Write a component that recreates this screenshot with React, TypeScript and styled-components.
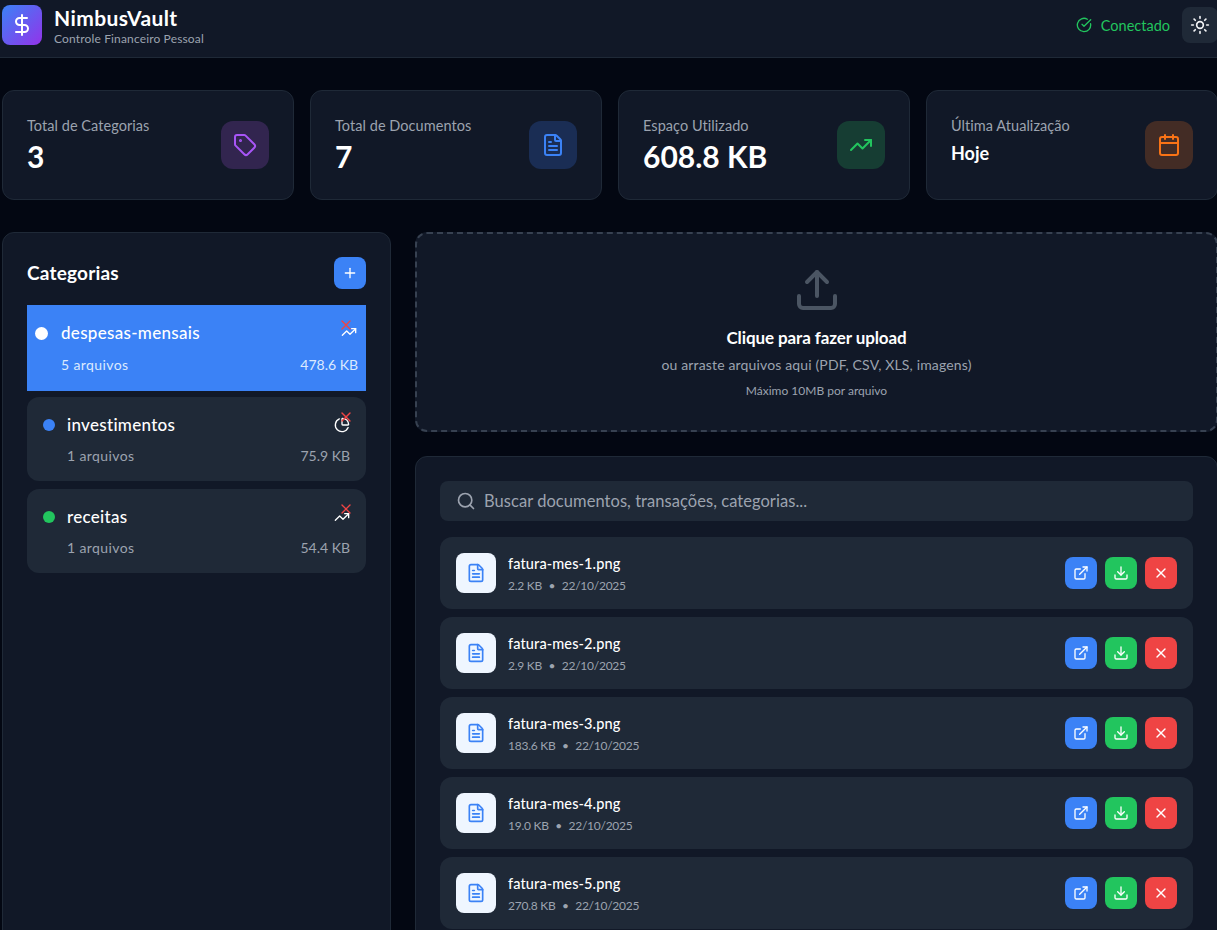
import React from 'react';
import styled, {createGlobalStyle} from 'styled-components';
import {
    Calendar,
    CircleCheckBig,
    DollarSign,
    Download,
    ExternalLink,
    FileText,
    PieChart,
    Plus,
    Search,
    Sun,
    Tag,
    TrendingUp,
    Upload,
    X,
} from 'lucide-react';

const GlobalStyle = createGlobalStyle`
    html, body {
        margin: 0;
        height: 930px;
        overflow: hidden;
        background: #030712;
        color: #fff;
        font-family: 'Lato', 'Noto Sans', sans-serif;
    }

    * {
        box-sizing: border-box;
    }
`;

const Header = styled.header`
    width: 1218px;
    height: 58px;
    padding: 5px 0 0 2px;
    display: flex;
    justify-content: space-between;
    align-items: flex-start;
    background: #111827;
    border-bottom: 1px solid #1f2937;
`;

const Brand = styled.div`
    display: flex;
    gap: 12px;
`;

const Logo = styled.div`
    width: 40px;
    height: 40px;
    border-radius: 8px;
    display: flex;
    align-items: center;
    justify-content: center;
    background: linear-gradient(135deg, #3b82f6, #9333ea);
`;

const BrandName = styled.div`
    font-size: 21px;
    line-height: 26px;
    font-weight: 700;
    letter-spacing: 0.4px;
`;

const BrandTagline = styled.div`
    font-size: 12px;
    line-height: 16px;
    letter-spacing: 0.15px;
    color: #9ca3af;
`;

const HeaderActions = styled.div`
    display: flex;
    align-items: center;
    gap: 12px;
    padding-top: 2px;
`;

const Status = styled.div`
    display: flex;
    align-items: center;
    gap: 9px;
    font-size: 14.5px;
    color: #22c55e;
`;

const ThemeButton = styled.button`
    width: 36px;
    height: 36px;
    border: 0;
    padding: 0;
    border-radius: 8px;
    display: flex;
    align-items: center;
    justify-content: center;
    background: #1f2937;
    color: #f3f4f6;
`;

const Page = styled.main`
    width: 1216px;
    margin-left: 2px;
    padding-top: 32px;
`;

const StatsGrid = styled.section`
    display: grid;
    grid-template-columns: repeat(4, 292px);
    gap: 16px;
    margin-bottom: 32px;
`;

const StatCard = styled.div`
    height: 110px;
    padding: 24px;
    display: flex;
    justify-content: space-between;
    align-items: center;
    background: #111827;
    border: 1px solid #1f2937;
    border-radius: 12px;
`;

const StatLabel = styled.div`
    font-size: 14.5px;
    line-height: 20px;
    letter-spacing: 0.05px;
    color: #9ca3af;
`;

const StatValue = styled.div<{$small?: boolean}>`
    font-size: ${props => (props.$small ? '18px' : '30px')};
    line-height: ${props => (props.$small ? '28px' : '36px')};
    font-weight: 700;
    margin-top: ${props => (props.$small ? '3px' : '2px')};
    margin-bottom: ${props => (props.$small ? '7px' : '0')};
`;

const StatIcon = styled.div<{$bg: string; $color: string}>`
    width: 48px;
    height: 48px;
    border-radius: 12px;
    display: flex;
    align-items: center;
    justify-content: center;
    background: ${props => props.$bg};
    color: ${props => props.$color};
`;

const Columns = styled.div`
    display: grid;
    grid-template-columns: 389px 803px;
    gap: 24px;
    align-items: start;
`;

const Sidebar = styled.aside`
    height: 720px;
    padding: 24px;
    background: #111827;
    border: 1px solid #1f2937;
    border-radius: 12px;
`;

const SidebarHead = styled.div`
    display: flex;
    justify-content: space-between;
    align-items: center;
    margin-bottom: 16px;
`;

const SidebarTitle = styled.h2`
    margin: -2px 0 0;
    font-size: 19px;
    font-weight: 700;
    letter-spacing: 0.2px;
`;

const AddButton = styled.button`
    width: 32px;
    height: 32px;
    border: 0;
    padding: 0;
    border-radius: 8px;
    display: flex;
    align-items: center;
    justify-content: center;
    background: #3b82f6;
    color: #fff;
`;

const CategoryList = styled.div`
    display: flex;
    flex-direction: column;
`;

const CategoryRow = styled.div<{$active?: boolean}>`
    position: relative;
    height: ${props => (props.$active ? '86px' : '84px')};
    padding: ${props => (props.$active ? '16px 8px' : '16px')};
    margin-bottom: ${props => (props.$active ? '6px' : '8px')};
    border-radius: ${props => (props.$active ? '0' : '12px')};
    background: ${props => (props.$active ? '#3b82f6' : '#1f2937')};
`;

const CategoryTop = styled.div<{$active?: boolean}>`
    display: flex;
    align-items: center;
    gap: ${props => (props.$active ? '13px' : '12px')};
    height: 24px;
    margin-bottom: ${props => (props.$active ? '10px' : '9px')};
`;

const Dot = styled.span<{$color: string; $active?: boolean}>`
    width: ${props => (props.$active ? '13px' : '12px')};
    height: ${props => (props.$active ? '13px' : '12px')};
    border-radius: 50%;
    flex: none;
    background: ${props => props.$color};
`;

const CategoryName = styled.span`
    flex: 1;
    margin-top: -2px;
    font-size: 17px;
    font-weight: 500;
    letter-spacing: 0.3px;
`;

const CategoryIcon = styled.span<{$active?: boolean}>`
    display: flex;
    margin: ${props => (props.$active ? '-3px 1px 0 0' : '-1px 0 0 0')};
    color: #fff;
`;

const DeleteMark = styled.span`
    position: absolute;
    top: 12px;
    right: 12px;
    display: flex;
    color: #ef4444;
`;

const CategoryMeta = styled.div<{$active?: boolean}>`
    display: flex;
    justify-content: space-between;
    padding-left: ${props => (props.$active ? '26px' : '24px')};
    font-size: 14px;
    line-height: 20px;
    color: ${props => (props.$active ? '#dbeafe' : '#9ca3af')};
`;

const CategoryFiles = styled.span`
    letter-spacing: 0.4px;
`;

const Content = styled.div`
    display: flex;
    flex-direction: column;
    gap: 24px;
`;

const DropZone = styled.div`
    height: 200px;
    display: flex;
    flex-direction: column;
    align-items: center;
    padding-top: 32px;
    background: #111827;
    border: 2px dashed #374151;
    border-radius: 12px;
    color: #4b5563;
`;

const DropTitle = styled.div`
    margin-top: 12px;
    font-size: 17px;
    line-height: 24px;
    font-weight: 700;
    letter-spacing: -0.1px;
    color: #fff;
`;

const DropHint = styled.div`
    margin-top: 5px;
    font-size: 14px;
    line-height: 20px;
    letter-spacing: 0.15px;
    color: #9ca3af;
`;

const DropLimit = styled.div`
    margin-top: 8px;
    font-size: 12px;
    line-height: 16px;
    color: #9ca3af;
`;

const DocumentsPanel = styled.section`
    height: 520px;
    padding: 24px;
    background: #111827;
    border: 1px solid #1f2937;
    border-radius: 12px;
`;

const SearchBar = styled.div`
    height: 40px;
    margin-bottom: 16px;
    padding: 0 16px;
    display: flex;
    align-items: center;
    gap: 8px;
    border-radius: 8px;
    background: #1f2937;
    color: #9ca3af;
`;

const SearchText = styled.span`
    font-size: 16.5px;
    letter-spacing: 0.05px;
`;

const DocumentRow = styled.div`
    height: 72px;
    margin-bottom: 8px;
    padding: 16px;
    display: flex;
    align-items: center;
    gap: 12px;
    border-radius: 12px;
    background: #1f2937;
`;

const DocumentIcon = styled.div`
    width: 40px;
    height: 40px;
    border-radius: 8px;
    flex: none;
    display: flex;
    align-items: center;
    justify-content: center;
    background: #eff6ff;
    color: #3b82f6;
`;

const DocumentInfo = styled.div`
    flex: 1;
    padding-top: 2px;
`;

const DocumentName = styled.div`
    font-size: 14.5px;
    line-height: 20px;
    font-weight: 500;
    letter-spacing: 0.12px;
`;

const DocumentMeta = styled.div`
    margin-top: 4px;
    display: flex;
    gap: 6.5px;
    font-size: 12px;
    line-height: 16px;
    letter-spacing: -0.25px;
    color: #9ca3af;
`;

const DocumentActions = styled.div`
    display: flex;
    gap: 8px;
`;

const ActionButton = styled.button<{$color: string}>`
    width: 32px;
    height: 32px;
    border: 0;
    padding: 0;
    border-radius: 8px;
    display: flex;
    align-items: center;
    justify-content: center;
    background: ${props => props.$color};
    color: #fff;
`;

const stats = [
    {label: 'Total de Categorias', value: '3', icon: Tag, bg: '#32254f', color: '#a855f7'},
    {label: 'Total de Documentos', value: '7', icon: FileText, bg: '#1a2d54', color: '#3b82f6'},
    {label: 'Espaço Utilizado', value: '608.8 KB', icon: TrendingUp, bg: '#163d33', color: '#22c55e'},
    {label: 'Última Atualização', value: 'Hoje', icon: Calendar, bg: '#432c25', color: '#f97316', small: true},
];

const categories = [
    {name: 'despesas-mensais', files: '5 arquivos', size: '478.6 KB', dot: '#fff', icon: TrendingUp, active: true},
    {name: 'investimentos', files: '1 arquivos', size: '75.9 KB', dot: '#3b82f6', icon: PieChart},
    {name: 'receitas', files: '1 arquivos', size: '54.4 KB', dot: '#22c55e', icon: TrendingUp},
];

const documents = [
    {name: 'fatura-mes-1.png', size: '2.2 KB'},
    {name: 'fatura-mes-2.png', size: '2.9 KB'},
    {name: 'fatura-mes-3.png', size: '183.6 KB'},
    {name: 'fatura-mes-4.png', size: '19.0 KB'},
    {name: 'fatura-mes-5.png', size: '270.8 KB'},
];

export default function App() {
    return (
        <>
            <GlobalStyle />
            <Header>
                <Brand>
                    <Logo>
                        <DollarSign size={24} color='#fff' />
                    </Logo>
                    <div>
                        <BrandName>NimbusVault</BrandName>
                        <BrandTagline>Controle Financeiro Pessoal</BrandTagline>
                    </div>
                </Brand>
                <HeaderActions>
                    <Status>
                        <CircleCheckBig size={16} />
                        Conectado
                    </Status>
                    <ThemeButton>
                        <Sun size={20} />
                    </ThemeButton>
                </HeaderActions>
            </Header>
            <Page>
                <StatsGrid>
                    {stats.map(stat => (
                        <StatCard key={stat.label}>
                            <div>
                                <StatLabel>{stat.label}</StatLabel>
                                <StatValue $small={stat.small}>{stat.value}</StatValue>
                            </div>
                            <StatIcon $bg={stat.bg} $color={stat.color}>
                                <stat.icon size={24} />
                            </StatIcon>
                        </StatCard>
                    ))}
                </StatsGrid>
                <Columns>
                    <Sidebar>
                        <SidebarHead>
                            <SidebarTitle>Categorias</SidebarTitle>
                            <AddButton>
                                <Plus size={16} />
                            </AddButton>
                        </SidebarHead>
                        <CategoryList>
                            {categories.map(category => (
                                <CategoryRow key={category.name} $active={category.active}>
                                    <CategoryTop $active={category.active}>
                                        <Dot $color={category.dot} $active={category.active} />
                                        <CategoryName>{category.name}</CategoryName>
                                        <CategoryIcon $active={category.active}>
                                            <category.icon size={16} />
                                        </CategoryIcon>
                                    </CategoryTop>
                                    <DeleteMark>
                                        <X size={16} />
                                    </DeleteMark>
                                    <CategoryMeta $active={category.active}>
                                        <CategoryFiles>{category.files}</CategoryFiles>
                                        <span>{category.size}</span>
                                    </CategoryMeta>
                                </CategoryRow>
                            ))}
                        </CategoryList>
                    </Sidebar>
                    <Content>
                        <DropZone>
                            <Upload size={48} strokeWidth={2} />
                            <DropTitle>Clique para fazer upload</DropTitle>
                            <DropHint>ou arraste arquivos aqui (PDF, CSV, XLS, imagens)</DropHint>
                            <DropLimit>Máximo 10MB por arquivo</DropLimit>
                        </DropZone>
                        <DocumentsPanel>
                            <SearchBar>
                                <Search size={20} />
                                <SearchText>Buscar documentos, transações, categorias...</SearchText>
                            </SearchBar>
                            {documents.map(doc => (
                                <DocumentRow key={doc.name}>
                                    <DocumentIcon>
                                        <FileText size={20} />
                                    </DocumentIcon>
                                    <DocumentInfo>
                                        <DocumentName>{doc.name}</DocumentName>
                                        <DocumentMeta>
                                            <span>{doc.size}</span>
                                            <span>•</span>
                                            <span>22/10/2025</span>
                                        </DocumentMeta>
                                    </DocumentInfo>
                                    <DocumentActions>
                                        <ActionButton $color='#3b82f6'>
                                            <ExternalLink size={16} />
                                        </ActionButton>
                                        <ActionButton $color='#22c55e'>
                                            <Download size={16} />
                                        </ActionButton>
                                        <ActionButton $color='#ef4444'>
                                            <X size={16} />
                                        </ActionButton>
                                    </DocumentActions>
                                </DocumentRow>
                            ))}
                        </DocumentsPanel>
                    </Content>
                </Columns>
            </Page>
        </>
    );
}
